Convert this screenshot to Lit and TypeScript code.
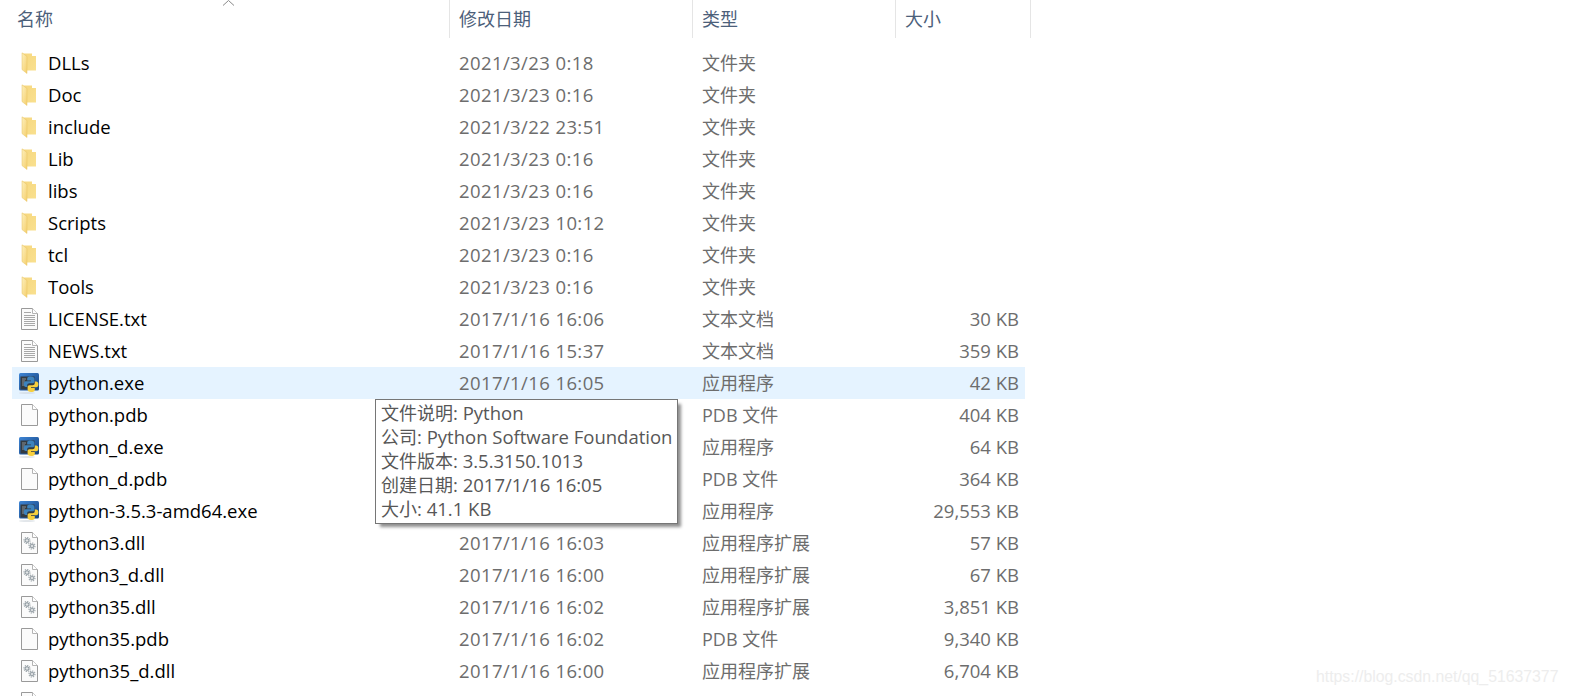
import { LitElement, html, css, svg } from "lit";
import { customElement } from "lit/decorators.js";

type Kind = "folder" | "text" | "py" | "blank" | "dll";
type Row = { k: Kind; n: string; d: string; t: string; s: string; hi?: boolean };

const F = "文件夹", A = "应用程序", X = "应用程序扩展", P = "PDB 文件", T = "文本文档";
const rows: Row[] = [
  { k: "folder", n: "DLLs", d: "2021/3/23 0:18", t: F, s: "" },
  { k: "folder", n: "Doc", d: "2021/3/23 0:16", t: F, s: "" },
  { k: "folder", n: "include", d: "2021/3/22 23:51", t: F, s: "" },
  { k: "folder", n: "Lib", d: "2021/3/23 0:16", t: F, s: "" },
  { k: "folder", n: "libs", d: "2021/3/23 0:16", t: F, s: "" },
  { k: "folder", n: "Scripts", d: "2021/3/23 10:12", t: F, s: "" },
  { k: "folder", n: "tcl", d: "2021/3/23 0:16", t: F, s: "" },
  { k: "folder", n: "Tools", d: "2021/3/23 0:16", t: F, s: "" },
  { k: "text", n: "LICENSE.txt", d: "2017/1/16 16:06", t: T, s: "30 KB" },
  { k: "text", n: "NEWS.txt", d: "2017/1/16 15:37", t: T, s: "359 KB" },
  { k: "py", n: "python.exe", d: "2017/1/16 16:05", t: A, s: "42 KB", hi: true },
  { k: "blank", n: "python.pdb", d: "", t: P, s: "404 KB" },
  { k: "py", n: "python_d.exe", d: "", t: A, s: "64 KB" },
  { k: "blank", n: "python_d.pdb", d: "", t: P, s: "364 KB" },
  { k: "py", n: "python-3.5.3-amd64.exe", d: "", t: A, s: "29,553 KB" },
  { k: "dll", n: "python3.dll", d: "2017/1/16 16:03", t: X, s: "57 KB" },
  { k: "dll", n: "python3_d.dll", d: "2017/1/16 16:00", t: X, s: "67 KB" },
  { k: "dll", n: "python35.dll", d: "2017/1/16 16:02", t: X, s: "3,851 KB" },
  { k: "blank", n: "python35.pdb", d: "2017/1/16 16:02", t: P, s: "9,340 KB" },
  { k: "dll", n: "python35_d.dll", d: "2017/1/16 16:00", t: X, s: "6,704 KB" },
  { k: "dll", n: "", d: "", t: "", s: "" },
];

const tips: [string, string][] = [
  ["文件说明", ": Python"],
  ["公司", ": Python Software Foundation"],
  ["文件版本", ": 3.5.3150.1013"],
  ["创建日期", ": 2017/1/16 16:05"],
  ["大小", ": 41.1 KB"],
];

const page = svg`<path d="M.5.5H11.5L16.5 5.5V21.5H.5Z" fill="#fbfbfb" stroke="#9a9a9a"/><path d="M11.5.5V5.5H16.5" fill="#fff" stroke="#b4b4b4"/>`;
const gear = (x: number, y: number) => svg`
  <circle cx=${x} cy=${y} r="3" fill="none" stroke="#a4acb0" stroke-width="1.2" stroke-dasharray="1.4 .9"/>
  <circle cx=${x} cy=${y} r="1.9" fill="#c9ced1" stroke="#87929a" stroke-width=".9"/>
  <circle cx=${x} cy=${y} r=".7" fill="#f6f6f6"/>`;

const icons: Record<Kind, unknown> = {
  folder: html`<svg width="18" height="22" viewBox="0 0 18 22">
    <defs>
      <linearGradient id="fb" x1="0" y1="0" x2="1" y2="1"><stop offset="0" stop-color="#f6d77e"/><stop offset="1" stop-color="#f9e08f"/></linearGradient>
      <linearGradient id="ff" x1="0" y1="0" x2="1" y2="1"><stop offset="0" stop-color="#fdf0bd"/><stop offset="1" stop-color="#f5cf6c"/></linearGradient>
    </defs>
    <path d="M2 1.5H12V4H16V18.5H5Z" fill="url(#fb)"/>
    <path d="M2 .8 7 4.5V21.5L2 17.6Z" fill="url(#ff)" stroke="#e6c263" stroke-width=".5"/>
  </svg>`,
  text: html`<svg width="17" height="22" viewBox="0 0 17 22">${page}
    <path d="M3 4.5H10M3 7.5H14M3 9.5H14M3 11.5H14M3 13.5H14M3 15.5H14M3 17.5H14" stroke="#a8a8a8" stroke-width="1" fill="none"/>
  </svg>`,
  blank: html`<svg width="17" height="22" viewBox="0 0 17 22">${page}</svg>`,
  dll: html`<svg width="17" height="22" viewBox="0 0 17 22">${page}${gear(6, 8.5)}${gear(11, 14)}</svg>`,
  py: html`<svg width="22" height="23" viewBox="0 0 22 23">
    <defs>
      <linearGradient id="pw" x1="0" y1="0" x2="1" y2="1"><stop offset="0" stop-color="#3f86d6"/><stop offset="1" stop-color="#123f7c"/></linearGradient>
    </defs>
    <rect x="1" y="1" width="20" height="17.5" rx="1.5" fill="url(#pw)"/>
    <rect x="2.5" y="4.5" width="14" height="13" fill="#333b42"/>
    <path d="M4 7H8M4 9H7M4 11H6M4 13H6" stroke="#8b949b" stroke-width="1"/>
    <path d="M12.8 4.5C9.5 4.5 9.2 5.6 9.2 7V8.5H13V9.2H7.8C6.4 9.2 5.8 10.4 5.8 12.2 5.8 14 6.6 15 7.8 15H9.2V13.2C9.2 11.9 10.2 11.2 11.4 11.2H14.6C15.6 11.2 16.4 10.4 16.4 9.4V7C16.4 5.6 15.4 4.5 12.8 4.5Z" fill="#3d83bd"/>
    <path d="M13.2 20C16.5 20 16.8 18.9 16.8 17.5V16H13V15.3H18.2C19.6 15.3 20.4 14.1 20.4 12.3 20.4 10.5 19.4 9.5 18.2 9.5H16.8V11.3C16.8 12.6 15.8 13.3 14.6 13.3H11.4C10.4 13.3 9.6 14.1 9.6 15.1V17.5C9.6 18.9 10.6 20 13.2 20Z" fill="#f7cf3d"/>
    <ellipse cx="9" cy="21" rx="8" ry="1" fill="#cfd6dc" opacity=".6"/>
  </svg>`,
};

@customElement("app-root")
export class AppRoot extends LitElement {
  static styles = css`
    :host {
      display: block;
      position: relative;
      width: 1569px;
      height: 696px;
      overflow: hidden;
      background: #fff;
      font-family: "Open Sans", "Noto Sans CJK SC", sans-serif;
      font-size: 18px;
    }
    .head {
      display: grid;
      grid-template-columns: 450px 243px 203px 135px;
      width: 1031px;
      height: 38px;
      color: #4c607a;
      line-height: 38px;
    }
    .head div {
      border-right: 1px solid #e5e5e5;
      padding-left: 9px;
      box-sizing: border-box;
      white-space: nowrap;
    }
    .head div:first-child { padding-left: 17px; }
    .list { padding: 9px 0 0 12px; }
    .row {
      display: grid;
      grid-template-columns: 9px 27px 411px 243px 203px 114px;
      width: 1013px;
      height: 32px;
      line-height: 32px;
      color: #6d6d6d;
      white-space: nowrap;
    }
    .row.hi { background: #e5f3ff; }
    .ic { grid-column: 2; display: flex; align-items: center; height: 32px; }
    .ic.py { margin-left: -3px; }
    .ic.folder { margin-left: -1px; }
    .name { color: #000; font-size: 18.5px; }
    .date { font-size: 18.5px; letter-spacing: 0.4px; }
    .size { font-size: 18.5px; text-align: right; }
    .chev { position: absolute; left: 222px; top: -1px; }
    .tip {
      position: absolute;
      left: 375px;
      top: 399px;
      width: 303px;
      height: 125px;
      box-sizing: border-box;
      border: 1px solid #767676;
      background: #fff;
      box-shadow: 4px 4px 3px -1px #8f8f8f;
      padding: 1px 0 0 5px;
      color: #575757;
      line-height: 24px;
      white-space: nowrap;
    }
    .tip b { font-weight: 400; font-size: 18.5px; }
    .mark {
      position: absolute;
      left: 1316px;
      top: 667px;
      font: 15.8px/20px "Liberation Sans", sans-serif;
      color: #ededed;
      white-space: nowrap;
    }
  `;

  render() {
    return html`
      <div class="head"><div>名称</div><div>修改日期</div><div>类型</div><div>大小</div></div>
      <svg class="chev" width="13" height="7" viewBox="0 0 13 7"><path d="M1 6.5 6.5 1.5 12 6.5" fill="none" stroke="#8a8a8a"/></svg>
      <div class="list">
        ${rows.map(
          (r) => html`<div class="row ${r.hi ? "hi" : ""}">
            <span class="ic ${r.k}">${icons[r.k]}</span>
            <span class="name">${r.n}</span><span class="date">${r.d}</span><span>${r.t}</span><span class="size">${r.s}</span>
          </div>`
        )}
      </div>
      <div class="tip">
        ${tips.map(([c, l]) => html`<div>${c}<b>${l}</b></div>`)}
      </div>
      <div class="mark">https://blog.csdn.net/qq_51637377</div>
    `;
  }
}
